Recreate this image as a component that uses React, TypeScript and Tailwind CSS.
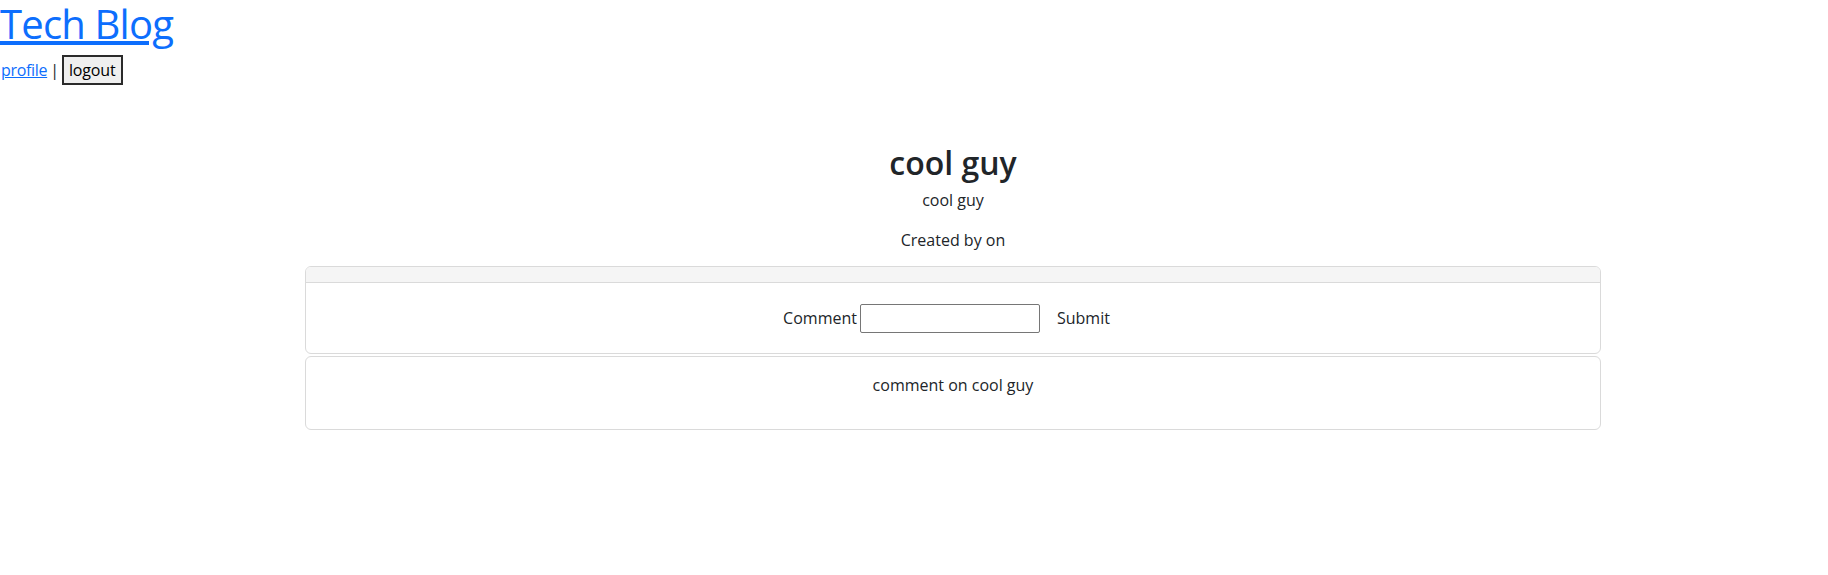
import React from "react";

export default function App() {
  return (
    <div className="min-h-[575px] bg-white text-[#212529] text-base leading-6 font-['Open_Sans',sans-serif]">
      <header>
        <h1 className="m-0 mb-2 text-[40px] font-normal leading-[1.2] tracking-[-0.02em]">
          <a href="#" className="text-[#0d6efd] underline">
            Tech Blog
          </a>
        </h1>
        <div className="flex items-center h-[32px] -mt-[2px]">
          <a href="#" className="text-[#0d6efd] underline tracking-[-0.02em] ml-[1px]">
            profile
          </a>
          <span className="mx-[3px]">|</span>
          <button className="h-[30px] px-[5px] border-2 border-[#2b2b2b] bg-[#efefef] text-black leading-6 tracking-[-0.01em]">
            logout
          </button>
        </div>
      </header>
      <main className="ml-[305px] w-[1296px] mt-[58px] text-center">
        <h2 className="text-[32px] font-semibold leading-[1.2] mb-[6px]">cool guy</h2>
        <p className="mb-4">cool guy</p>
        <p className="mb-[14px]">Created by on</p>
        <div className="border border-[#dadada] rounded-[6px] overflow-hidden">
          <div className="h-[16px] bg-[#f5f5f5] border-b border-[#dadada]" />
          <div className="p-4 flex justify-center items-center">
            <label className="mr-[3px]">Comment</label>
            <input
              type="text"
              className="w-[180px] h-[29px] border border-[#767676] rounded-[2px] px-[2px]"
            />
            <button className="ml-[4px] px-3 py-[6px] border border-transparent leading-6 text-[#212529]">
              Submit
            </button>
          </div>
        </div>
        <div className="mt-[2px] border border-[#dadada] rounded-[6px] p-4">
          <p className="mb-4">comment on cool guy</p>
        </div>
      </main>
    </div>
  );
}
